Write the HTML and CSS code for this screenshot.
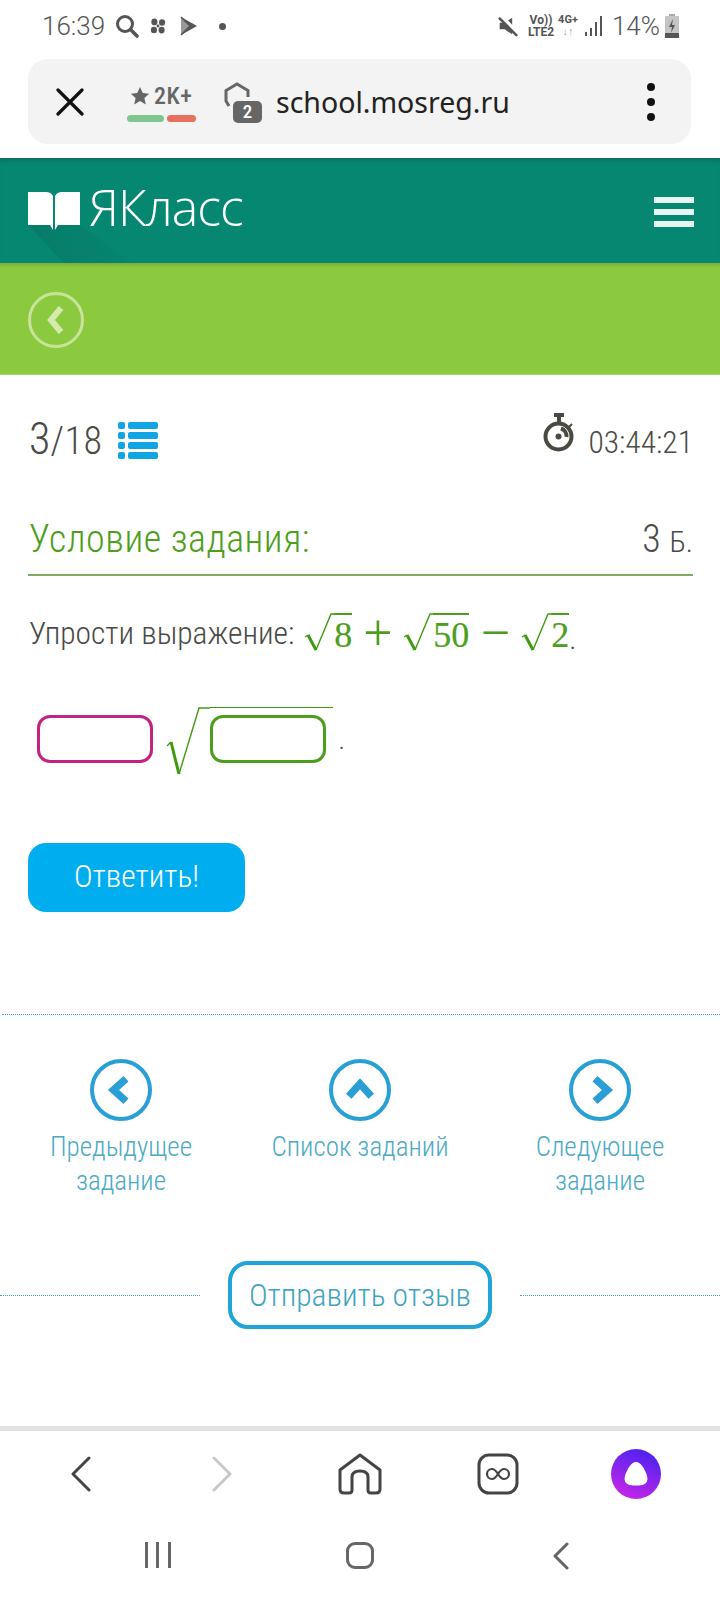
FILE: index.html
```html
<!DOCTYPE html>
<html lang="ru">
<head>
  <meta charset="UTF-8" />
  <meta name="viewport" content="width=device-width, initial-scale=1.0" />
  <title>ЯКласс</title>
  <link rel="stylesheet" href="styles.css">
</head>
<body>
  <div class="status-bar">
    <div class="status-left">
      <span class="clock">16:39</span>
      <svg class="st-search" viewBox="0 0 24 24"><circle cx="10" cy="10" r="7.5" fill="none" stroke="#555" stroke-width="3"/><path d="M15.5 15.5 22 22" stroke="#555" stroke-width="3.6" stroke-linecap="round"/></svg>
      <svg class="st-fan" viewBox="0 0 20 20" fill="#555"><circle cx="10" cy="10" r="1.6"/><ellipse cx="6" cy="5.5" rx="3.4" ry="3.8"/><ellipse cx="14.5" cy="6" rx="3.4" ry="3.6"/><ellipse cx="5.5" cy="14.5" rx="3.4" ry="3.6"/><ellipse cx="14" cy="14.5" rx="3.4" ry="3.8"/></svg>
      <svg class="st-play" viewBox="0 0 20 20"><path d="M2 1 18 10 2 19Z" fill="#555"/><path d="M2 1 11 10 2 19" fill="#999"/><path d="M2 1 11 10 2 19" fill="none" stroke="#555" stroke-width="1.500"/></svg>
      <span class="st-dot"></span>
    </div>
    <div class="status-right">
      <svg class="st-mute" viewBox="0 0 24 24"><path d="M2 8h6l9-6v20l-9-6H2z" fill="#555"/><path d="M5 1l19 21" stroke="#fff" stroke-width="5"/><path d="M2 3l20 20" stroke="#555" stroke-width="3" stroke-linecap="round"/></svg>
      <span class="st-net st-volte"><b>Vo))</b><b>LTE2</b></span>
      <span class="st-net"><b>4G+</b><b class="st-arrows">↓↑</b></span>
      <svg class="st-signal" viewBox="0 0 18 22" fill="#555"><rect x="0" y="17" width="2" height="4"/><rect x="5" y="13" width="2" height="8"/><rect x="10" y="7" width="2" height="14"/><rect x="15" y="1" width="2" height="20"/></svg>
      <span class="st-pct">14%</span>
      <svg class="st-batt" viewBox="0 0 14 24"><rect x="4" y="0" width="6" height="3" fill="#aaa"/><rect x="0" y="2" width="14" height="22" fill="#c4c4c4"/><rect x="0" y="19" width="14" height="5" fill="#555"/><path d="M8 5 4 13h3l-1 6 4-8H7z" fill="#555"/></svg>
    </div>
  </div>

  <div class="tab-bar">
    <svg class="tb-close" viewBox="0 0 28 28"><path d="M2 2 26 26M26 2 2 26" stroke="#111" stroke-width="3.2" stroke-linecap="round"/></svg>
    <div class="rating">
      <div class="rating-top">
        <svg viewBox="0 0 20 20"><path d="M10 1l2.8 6 6.4.7-4.8 4.3 1.4 6.4L10 15.100l-5.800 3.300 1.400-6.400L.8 7.700 7.200 7z" fill="#666"/></svg>
        <span>2K+</span>
      </div>
      <div class="rating-bars"><i class="bar-good"></i><i class="bar-bad"></i></div>
    </div>
    <div class="shield">
      <svg viewBox="0 0 32 36"><path d="M6 25 3 20V9.500L14 3l11 6.500V16" fill="none" stroke="#666" stroke-width="3"/></svg>
      <span class="shield-num">2</span>
    </div>
    <span class="url">school.mosreg.ru</span>
    <div class="tb-menu"><i></i><i></i><i></i></div>
  </div>

  <header class="site-header">
    <svg class="logo-shadow" viewBox="0 0 110 38">
      <defs><linearGradient id="logoFade" x1="0" y1="0" x2="1" y2="0"><stop offset="0" stop-color="#06705f" stop-opacity=".5"/><stop offset="1" stop-color="#06705f" stop-opacity=".05"/></linearGradient></defs>
      <path d="M0 0H52L104 38H36Z" fill="url(#logoFade)"/>
    </svg>
    <svg class="logo-book" viewBox="0 0 52 38" fill="#fff"><path d="M0 0H18Q23 0 25 4V38L22 33H0Z"/><path d="M52 0H34Q29 0 27 4V38L30 33H52Z"/></svg>
    <span class="logo-text">ЯКласс</span>
    <div class="burger"><i></i><i></i><i></i></div>
  </header>

  <div class="sub-header">
    <div class="back-circle">
      <svg viewBox="0 0 20 32"><path d="M15 4 5 16l10 12" fill="none" stroke="#d6eab0" stroke-width="6"/></svg>
    </div>
  </div>

  <main class="content">
    <div class="progress-row">
      <div class="progress">
        <span class="progress-cur">3</span><span class="progress-all">/18</span>
        <svg class="list-icon" viewBox="0 0 40 37" fill="#12a5e3">
          <rect x="0" y="0" width="7" height="7" rx="2"/><rect x="10" y="0" width="30" height="7" rx="2"/>
          <rect x="0" y="10" width="7" height="7" rx="2"/><rect x="10" y="10" width="30" height="7" rx="2"/>
          <rect x="0" y="20" width="7" height="7" rx="2"/><rect x="10" y="20" width="30" height="7" rx="2"/>
          <rect x="0" y="30" width="7" height="7" rx="2"/><rect x="10" y="30" width="30" height="7" rx="2"/>
        </svg>
      </div>
      <div class="timer">
        <svg class="timer-icon" viewBox="0 0 32 40">
          <rect x="11" y="1" width="10" height="4" fill="#4a4a42"/><rect x="14" y="5" width="4" height="5" fill="#4a4a42"/>
          <path d="M26 15l3-3" stroke="#4a4a42" stroke-width="2"/>
          <circle cx="15.500" cy="24.500" r="13" fill="none" stroke="#4a4a42" stroke-width="4"/>
          <circle cx="15.500" cy="24.500" r="3" fill="#4a4a42"/>
          <path d="M18 16.500A8 8 0 0 1 23.500 25" fill="none" stroke="#4a4a42" stroke-width="4"/>
        </svg>
        <span class="timer-val">03:44:21</span>
      </div>
    </div>

    <div class="task-head">
      <h2>Условие задания:</h2>
      <span class="points">3 <small>Б.</small></span>
    </div>

    <p class="statement">
      <span>Упрости выражение:</span>
      <span class="math">
        <span class="root"><svg viewBox="0 0 30 40" preserveAspectRatio="none"><path d="M1 24l3-2" fill="none" stroke="#3f9a12" stroke-width="1.200"/><path d="M4 22l8 15" fill="none" stroke="#3f9a12" stroke-width="3"/><path d="M12 37 27 1h3" fill="none" stroke="#3f9a12" stroke-width="1.400"/></svg><span class="radicand">8</span></span>
        <span class="op">+</span>
        <span class="root"><svg viewBox="0 0 30 40" preserveAspectRatio="none"><path d="M1 24l3-2" fill="none" stroke="#3f9a12" stroke-width="1.200"/><path d="M4 22l8 15" fill="none" stroke="#3f9a12" stroke-width="3"/><path d="M12 37 27 1h3" fill="none" stroke="#3f9a12" stroke-width="1.400"/></svg><span class="radicand">50</span></span>
        <span class="op op-minus">−</span>
        <span class="root"><svg viewBox="0 0 30 40" preserveAspectRatio="none"><path d="M1 24l3-2" fill="none" stroke="#3f9a12" stroke-width="1.200"/><path d="M4 22l8 15" fill="none" stroke="#3f9a12" stroke-width="3"/><path d="M12 37 27 1h3" fill="none" stroke="#3f9a12" stroke-width="1.400"/></svg><span class="radicand">2</span></span>
      </span><span class="stop">.</span>
    </p>

    <div class="answer-row">
      <input class="answer answer-pink" />
      <div class="answer-root">
        <svg viewBox="0 0 44 68" preserveAspectRatio="none"><path d="M1 39l4-4" fill="none" stroke="#3f9a12" stroke-width="1.200"/><path d="M5 35l8 32" fill="none" stroke="#3f9a12" stroke-width="3"/><path d="M13 67 33 1h11" fill="none" stroke="#3f9a12" stroke-width="1.400"/></svg>
        <div class="answer-radicand"><input class="answer answer-green" /></div>
      </div>
      <span class="answer-stop">.</span>
    </div>

    <button class="submit">Ответить!</button>
  </main>

  <nav class="task-nav">
    <a class="nav-item">
      <span class="nav-circle"><svg viewBox="0 0 24 24"><path d="M16 3 6 12l10 9" fill="none" stroke="#2a9fd6" stroke-width="6"/></svg></span>
      Предыдущее<br>задание
    </a>
    <a class="nav-item">
      <span class="nav-circle"><svg viewBox="0 0 24 24"><path d="M3 17 12 7l9 10" fill="none" stroke="#2a9fd6" stroke-width="6"/></svg></span>
      Список заданий
    </a>
    <a class="nav-item">
      <span class="nav-circle"><svg viewBox="0 0 24 24"><path d="M8 3l10 9-10 9" fill="none" stroke="#2a9fd6" stroke-width="6"/></svg></span>
      Следующее<br>задание
    </a>
  </nav>

  <div class="feedback-row">
    <span class="dots"></span>
    <button class="feedback">Отправить отзыв</button>
    <span class="dots"></span>
  </div>

  <div class="browser-bar">
    <svg class="bb-chev" viewBox="0 0 20 36"><path d="M18 2 2 18l16 16" fill="none" stroke="#444" stroke-width="3" stroke-linecap="round" stroke-linejoin="round"/></svg>
    <svg class="bb-chev" viewBox="0 0 20 36"><path d="M2 2 18 18 2 34" fill="none" stroke="#c8c8c8" stroke-width="3" stroke-linecap="round" stroke-linejoin="round"/></svg>
    <svg class="bb-home" viewBox="0 0 44 42"><path d="M2 17 22 2l20 15v19q0 4-4 4h-5q-3 0-3-3V24q0-6-8-6t-8 6v13q0 3-3 3H6q-4 0-4-4Z" fill="none" stroke="#444" stroke-width="3" stroke-linejoin="round"/></svg>
    <svg class="bb-tabs" viewBox="0 0 42 42"><rect x="2" y="2" width="38" height="38" rx="10" fill="none" stroke="#444" stroke-width="3"/><path d="M21 21c-2.500-4-4-5-6-5a5 5 0 0 0 0 10c2 0 3.500-1 6-5s4-5 6-5a5 5 0 0 1 0 10c-2 0-3.500-1-6-5Z" fill="none" stroke="#444" stroke-width="2.200"/></svg>
    <svg class="bb-alice" viewBox="0 0 50 50">
      <defs><linearGradient id="aliceGrad" x1="0.7" y1="0" x2="0.3" y2="1"><stop offset="0" stop-color="#4a22f0"/><stop offset="1" stop-color="#c726e8"/></linearGradient></defs>
      <circle cx="25" cy="25" r="25" fill="url(#aliceGrad)"/>
      <path d="M25 13c4 0 7 4 10 11 3 7 1 11-4 12q-6 1-12 0c-5-1-7-5-4-12 3-7 6-11 10-11Z" fill="#fff"/>
    </svg>
  </div>

  <div class="system-nav">
    <div class="sys-recent"><i></i><i></i><i></i></div>
    <div class="sys-home"></div>
    <svg class="sys-back" viewBox="0 0 16 28"><path d="M14 2 2 14l12 12" fill="none" stroke="#666" stroke-width="3" stroke-linecap="round" stroke-linejoin="round"/></svg>
  </div>
</body>
</html>
```

FILE: styles.css
```css
:root {
  --teal: #058771;
  --lime: #8bc93f;
  --green: #4d9e1c;
  --blue: #00aeef;
  --link: #4aa9c4;
  --ring: #2a9fd6;
  --text: #4a4a46;
}

html, body {
  margin: 0;
  height: 1600px;
  overflow: hidden;
}

body {
  width: 720px;
  background: #fff;
  font-family: Roboto, sans-serif;
  font-weight: 300;
  font-stretch: 85%;
  color: var(--text);
}

svg {
  display: block;
  flex: none;
}

/* status bar */
.status-bar {
  height: 59px;
  padding: 0 41px 7px 42px;
  display: flex;
  justify-content: space-between;
  align-items: center;
  box-sizing: border-box;
  color: #555;
}

.status-left, .status-right {
  display: flex;
  align-items: center;
}

.clock {
  font-size: 26px;
  font-weight: 300;
  font-stretch: 100%;
}

.st-search { width: 24px; height: 24px; margin-left: 10px; }
.st-fan { width: 18px; height: 18px; margin-left: 10px; }
.st-play { width: 20px; height: 20px; margin-left: 12px; }

.st-dot {
  width: 7px;
  height: 7px;
  margin-left: 20px;
  border-radius: 50%;
  background: #555;
}

.st-mute { width: 20px; height: 24px; }

.st-net {
  display: flex;
  flex-direction: column;
  align-items: center;
  margin-left: 4px;
  font-size: 11px;
  line-height: 12px;
  font-stretch: 100%;
}

.st-volte { margin-left: 10px; font-size: 12px; }

.st-net b { font-weight: 700; }
.st-arrows { color: #aaa; }

.st-signal { width: 18px; height: 22px; margin-left: 7px; }

.st-pct {
  margin-left: 9px;
  font-size: 26px;
  font-weight: 300;
  font-stretch: 100%;
}

.st-batt { width: 14px; height: 24px; margin-left: 5px; }

/* browser tab bar */
.tab-bar {
  height: 85px;
  margin: 0 29px 14px 28px;
  background: #f3f3f3;
  border-radius: 20px;
  display: flex;
  align-items: center;
  position: relative;
}

.tb-close { width: 28px; height: 28px; margin-left: 28px; }

.rating { margin-left: 43px; width: 70px; }

.rating-top {
  display: flex;
  align-items: center;
  gap: 4px;
  margin-left: 3px;
  font-size: 24px;
  font-weight: 500;
  font-stretch: 85%;
  letter-spacing: .5px;
  color: #666;
}

.rating-top svg { width: 20px; height: 20px; }

.rating-bars {
  display: flex;
  gap: 3px;
  margin-top: 5px;
}

.rating-bars i {
  height: 7px;
  border-radius: 4px;
}

.bar-good { width: 37px; background: #7fc68f; }
.bar-bad { width: 29px; background: #e8705c; }

.shield {
  position: relative;
  width: 40px;
  height: 42px;
  margin-left: 26px;
}

.shield svg { width: 32px; height: 36px; }

.shield-num {
  position: absolute;
  right: 1px;
  bottom: 0;
  width: 29px;
  height: 22px;
  border-radius: 5px;
  background: #666;
  color: #fff;
  font-size: 19px;
  font-weight: 500;
  line-height: 22px;
  text-align: center;
}

.url {
  margin-left: 13px;
  font-size: 28.500px;
  font-weight: 400;
  color: #222;
  font-family: "Noto Sans", sans-serif;
  font-stretch: 100%;
}

.tb-menu {
  margin-left: auto;
  margin-right: 36px;
  display: flex;
  flex-direction: column;
  gap: 7px;
}

.tb-menu i {
  width: 8px;
  height: 8px;
  border-radius: 50%;
  background: #111;
}

/* site header */
.site-header {
  height: 105px;
  background: var(--teal);
  box-shadow: inset 0 5px 4px -3px #066e5c;
  position: relative;
  display: flex;
  align-items: flex-start;
  padding: 34px 26px 0 28px;
  box-sizing: border-box;
}

.logo-shadow {
  position: absolute;
  left: 28px;
  bottom: 0;
  width: 110px;
  height: 38px;
}

.logo-book { width: 52px; height: 38px; position: relative; }

.logo-text {
  position: relative;
  margin: -17px 0 0 9px;
  font-family: "Open Sans", sans-serif;
  font-stretch: 100%;
  font-size: 50px;
  font-weight: 300;
  line-height: 64px;
  letter-spacing: -1px;
  color: #fff;
}

.burger {
  margin-left: auto;
  margin-top: 5px;
  width: 40px;
  display: flex;
  flex-direction: column;
  gap: 6px;
}

.burger i {
  height: 6px;
  background: #e6f7f2;
}

.sub-header {
  height: 112px;
  background: linear-gradient(#7cb032, var(--lime) 5px);
  border-bottom: 1px solid #a5d466;
  padding: 29px 0 0 28px;
  box-sizing: border-box;
}

.back-circle {
  width: 56px;
  height: 56px;
  border: 3px solid #c8e49a;
  border-radius: 50%;
  box-sizing: border-box;
  display: flex;
  align-items: center;
  justify-content: center;
}

.back-circle svg { width: 20px; height: 32px; }

/* task */
.content {
  padding: 0 27px 0 28px;
}

.progress-row {
  height: 90px;
  display: flex;
  justify-content: space-between;
  align-items: flex-end;
  box-sizing: border-box;
}

.progress {
  display: flex;
  align-items: baseline;
  line-height: 48px;
  padding-left: 1px;
}

.progress-cur { font-size: 44px; }
.progress-all { font-size: 38px; letter-spacing: .5px; }

.list-icon {
  width: 40px;
  height: 37px;
  margin-left: 16px;
  align-self: center;
}

.timer {
  display: flex;
  align-items: flex-start;
  padding-bottom: 4px;
}

.timer-icon { width: 32px; height: 40px; margin-top: -13px; }

.timer-val {
  margin-left: 13px;
  font-size: 31.500px;
  line-height: 36px;
}

.task-head {
  margin-top: 49px;
  height: 60px;
  border-bottom: 2px solid #7fab62;
  display: flex;
  justify-content: space-between;
  align-items: flex-start;
}

.task-head h2 {
  margin: 0;
  font-size: 38px;
  font-weight: 300;
  letter-spacing: .5px;
  line-height: 50px;
  color: var(--green);
  padding-left: 1px;
}

.points { font-size: 38px; line-height: 50px; }
.points small { font-size: 30px; }

.statement {
  margin: 33px 0 0;
  height: 48px;
  display: flex;
  align-items: center;
  font-size: 31.500px;
  padding-left: 1px;
}

.math {
  display: flex;
  align-items: center;
  margin-left: 10px;
  font-family: "Liberation Serif", serif;
  font-stretch: 100%;
  font-size: 36px;
  font-weight: 400;
  color: var(--green);
  -webkit-text-stroke: 0.2px var(--green);
}

.root {
  display: flex;
  align-items: flex-start;
}

.root svg { width: 30px; height: 40px; }

.radicand {
  border-top: 2px solid var(--green);
  height: 38px;
  line-height: 40px;
}

.op {
  width: 51px;
  text-align: center;
  font-size: 52px;
  line-height: 40px;
  -webkit-text-stroke: 0;
}

.op-minus { width: 52px; }

.stop { align-self: flex-end; font-size: 30px; line-height: 36px; }

.answer-row {
  margin: 50px 0 0 9px;
  height: 68px;
  display: flex;
  align-items: flex-start;
}

.answer {
  display: block;
  width: 116px;
  height: 48px;
  border: 3px solid;
  border-radius: 13px;
  box-sizing: border-box;
  background: #fff;
  padding: 0;
  margin: 0;
  outline: 0;
}

.answer-pink { border-color: #c2237f; margin-top: 8px; }
.answer-green { border-color: #4d9e1c; }

.answer-root {
  display: flex;
  margin-left: 13px;
}

.answer-root svg { width: 44px; height: 68px; }

.answer-radicand {
  width: 123px;
  height: 67px;
  border-top: 1px solid #3f9a12;
  padding-top: 7px;
  box-sizing: border-box;
}

.answer-stop {
  margin: 20px 0 0 6px;
  font-size: 20px;
  font-weight: 400;
  line-height: 30px;
}

.submit {
  display: block;
  margin-top: 68px;
  width: 217px;
  height: 69px;
  border: 0;
  border-radius: 18px;
  background: var(--blue);
  color: #fff;
  font-family: inherit;
  font-stretch: inherit;
  font-weight: 300;
  font-size: 31.500px;
  padding: 0 0 3px;
}

/* nav under the task */
.task-nav {
  margin: 102px 0 0 2px;
  padding-top: 44px;
  height: 247px;
  box-sizing: border-box;
  border-top: 1px dotted #3fa5c4;
  display: grid;
  grid-template-columns: 238px 240px 240px;
}

.nav-item {
  display: flex;
  flex-direction: column;
  align-items: center;
  text-align: center;
  font-size: 27px;
  line-height: 33.500px;
  color: var(--link);
}

.nav-circle {
  width: 62px;
  height: 62px;
  margin-bottom: 10px;
  border: 4px solid var(--ring);
  border-radius: 50%;
  box-sizing: border-box;
  display: flex;
  align-items: center;
  justify-content: center;
}

.nav-circle svg { width: 30px; height: 30px; }

.feedback-row {
  height: 68px;
  display: flex;
  align-items: center;
}

.dots {
  flex: 1;
  border-top: 1px dotted #3fa5c4;
}

.feedback {
  width: 264px;
  height: 68px;
  margin: 0 28px;
  border: 4px solid #1fa5d8;
  border-radius: 20px;
  background: #fff;
  color: #3ea4c0;
  font-family: inherit;
  font-stretch: inherit;
  font-weight: 300;
  font-size: 31.500px;
  padding: 0;
}

/* browser bottom bar */
.browser-bar {
  margin-top: 97px;
  height: 91px;
  border-top: 5px solid #e2e2e2;
  box-sizing: border-box;
  display: grid;
  grid-template-columns: 142px 140px 136px 140px 136px;
  justify-items: center;
  align-items: center;
  padding: 0 0 0 10px;
}

.bb-chev { width: 20px; height: 36px; }
.bb-home { width: 44px; height: 42px; }
.bb-tabs { width: 42px; height: 42px; }
.bb-alice { width: 50px; height: 50px; }

.system-nav {
  height: 79px;
  display: grid;
  grid-template-columns: 315px 90px 311px;
  justify-items: center;
  align-items: start;
  padding-top: 25px;
  box-sizing: border-box;
}

.sys-recent {
  width: 26px;
  height: 26px;
  display: flex;
  justify-content: space-between;
}

.sys-recent i {
  width: 3px;
  background: #666;
}

.sys-home {
  width: 28px;
  height: 27px;
  border: 3px solid #666;
  border-radius: 9px;
  box-sizing: border-box;
}

.sys-back { width: 16px; height: 28px; }
```
